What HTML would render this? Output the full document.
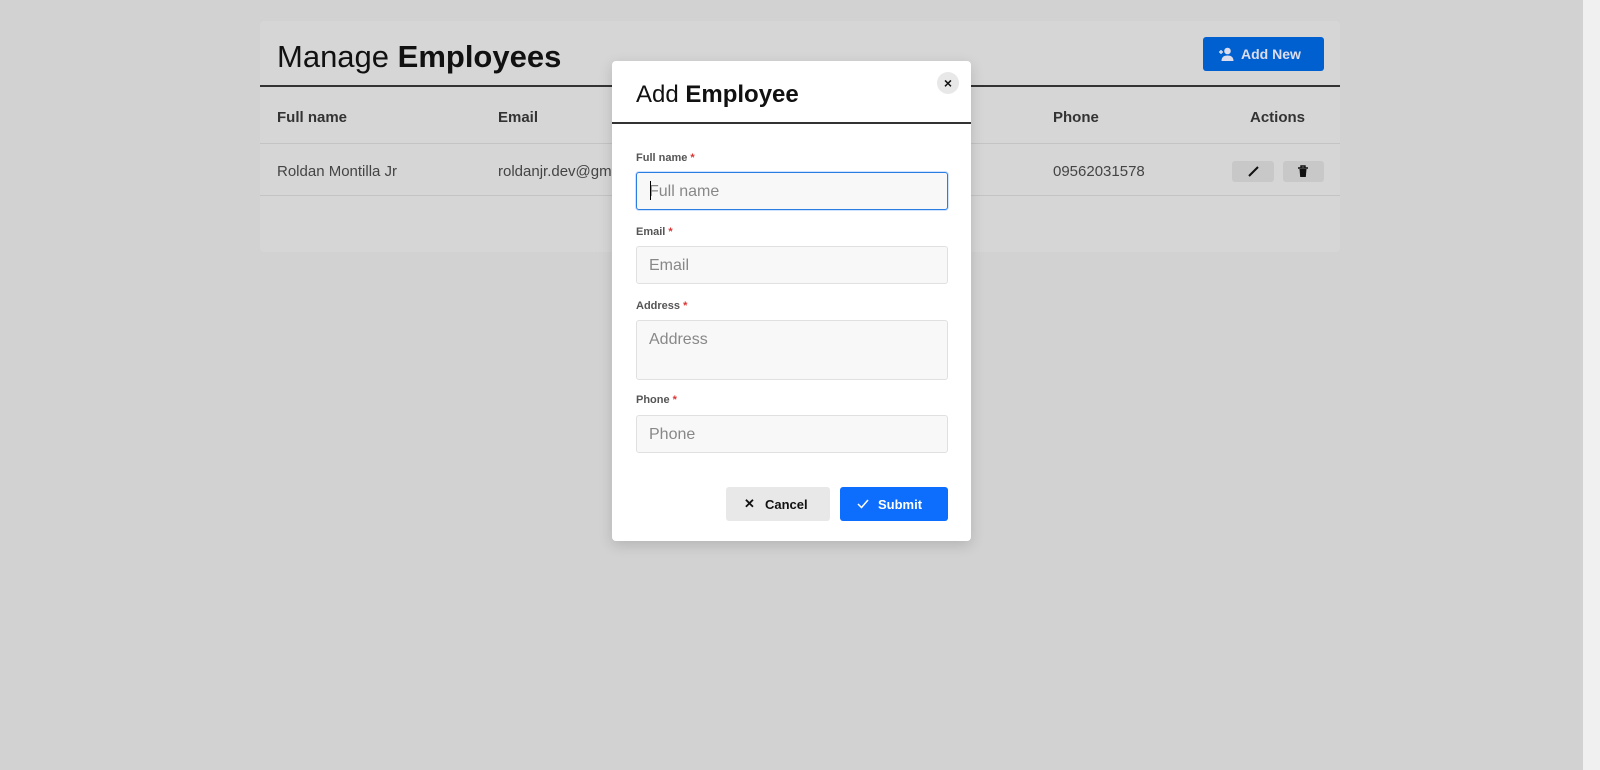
<!DOCTYPE html>
<html><head><style>
*{box-sizing:border-box;margin:0;padding:0}
body{width:1600px;height:770px;background:#d2d2d2;font-family:"Liberation Sans",sans-serif;position:relative;overflow:hidden}
.abs{position:absolute}
.card{left:260px;top:21px;width:1080px;height:231px;background:#d6d6d6;border-radius:4px}
.t{position:absolute;white-space:nowrap}
.sb{left:1583px;top:0;width:17px;height:770px;background:#f0f0f0}
.modal{left:612px;top:61px;width:359px;height:480px;background:#fff;border-radius:4px;box-shadow:0 4px 14px rgba(0,0,0,.15)}
.lbl{font-size:11px;font-weight:bold;color:#555}
.lbl span{color:#d33}
.inp{position:absolute;left:24px;width:312px;height:38px;background:#f8f8f8;border:1px solid #e0e0e0;border-radius:3px;font-size:16px;color:#888;padding:10px 12px}
</style></head><body>
<div class="abs card">
  <div class="t" style="left:17px;top:18px;font-size:31px;color:#111">Manage <b>Employees</b></div>
  <div class="abs" style="left:943px;top:16px;width:121px;height:34px;background:#0060d0;border-radius:3px;color:#dde;font-size:14px;font-weight:bold">
    <svg class="abs" style="left:15px;top:10px" width="16" height="14" viewBox="0 0 16 14"><circle cx="9.5" cy="4" r="3.3" fill="#dde"/><path d="M3.5 14c0-4 2.5-5.5 6-5.5s6 1.5 6 5.5z" fill="#dde"/><path d="M1 5h4M3 3v4" stroke="#dde" stroke-width="1.4"/></svg>
    <span class="t" style="left:38px;top:9px">Add New</span>
  </div>
  <div class="abs" style="left:0;top:64px;width:1080px;height:2px;background:#333"></div>
  <div class="t" style="left:17px;top:88px;font-size:15px;font-weight:bold;color:#333">Full name</div>
  <div class="t" style="left:238px;top:88px;font-size:15px;font-weight:bold;color:#333">Email</div>
  <div class="t" style="left:793px;top:88px;font-size:15px;font-weight:bold;color:#333">Phone</div>
  <div class="t" style="left:990px;top:88px;font-size:15px;font-weight:bold;color:#333">Actions</div>
  <div class="abs" style="left:0;top:122px;width:1080px;height:1px;background:#c4c4c4"></div>
  <div class="t" style="left:17px;top:142px;font-size:15px;color:#444">Roldan Montilla Jr</div>
  <div class="t" style="left:238px;top:142px;font-size:15px;color:#444">roldanjr.dev@gmail.com</div>
  <div class="t" style="left:793px;top:142px;font-size:15px;color:#444">09562031578</div>
  <div class="abs" style="left:972px;top:140px;width:42px;height:21px;background:#c8c8c8;border-radius:3px"><svg class="abs" style="left:15px;top:4px" width="13" height="13"><path d="M2 11L11 2" stroke="#111" stroke-width="2"/></svg></div>
  <div class="abs" style="left:1023px;top:140px;width:41px;height:21px;background:#c8c8c8;border-radius:3px"><svg class="abs" style="left:14px;top:4px" width="12" height="13"><path d="M1 3h10M4 3V1h4v2" stroke="#111" stroke-width="1.4" fill="none"/><path d="M2.5 4h7l-.7 8h-5.6z" fill="#111"/></svg></div>
  <div class="abs" style="left:0;top:174px;width:1080px;height:1px;background:#c4c4c4"></div>
</div>
<div class="abs sb"></div>
<div class="abs modal">
  <div class="t" style="left:24px;top:20px;font-size:24px;color:#111">Add <b>Employee</b></div>
  <div class="abs" style="left:325px;top:11px;width:22px;height:22px;border-radius:50%;background:#e8e8e8;font-size:14px;font-weight:bold;text-align:center;line-height:22px;color:#111">×</div>
  <div class="abs" style="left:0;top:61px;width:359px;height:2px;background:#333"></div>
  <div class="t lbl" style="left:24px;top:91px">Full name <span>*</span></div>
  <div class="inp" style="top:111px;border:1px solid #2a7de1;background:#f8f8f8;box-shadow:0 0 0 1px #cfe2ff">Full name</div>
  <div class="abs" style="left:38px;top:120px;width:1px;height:19px;background:#000"></div>
  <div class="t lbl" style="left:24px;top:165px">Email <span>*</span></div>
  <div class="inp" style="top:185px">Email</div>
  <div class="t lbl" style="left:24px;top:239px">Address <span>*</span></div>
  <div class="inp" style="top:259px;height:60px">Address</div>
  <div class="t lbl" style="left:24px;top:333px">Phone <span>*</span></div>
  <div class="inp" style="top:354px">Phone</div>
  <div class="abs" style="left:114px;top:426px;width:104px;height:34px;background:#e8e8e8;border-radius:3px;font-size:13px;font-weight:bold;color:#111"><span class="t" style="left:18px;top:9px">✕</span><span class="t" style="left:39px;top:10px">Cancel</span></div>
  <div class="abs" style="left:228px;top:426px;width:108px;height:34px;background:#0d6efd;border-radius:3px;font-size:13px;font-weight:bold;color:#fff"><svg class="abs" style="left:17px;top:12px" width="12" height="10"><path d="M1 5l3.5 3.5L11 1" stroke="#fff" stroke-width="1.5" fill="none"/></svg><span class="t" style="left:38px;top:10px">Submit</span></div>
</div>
</body></html>
